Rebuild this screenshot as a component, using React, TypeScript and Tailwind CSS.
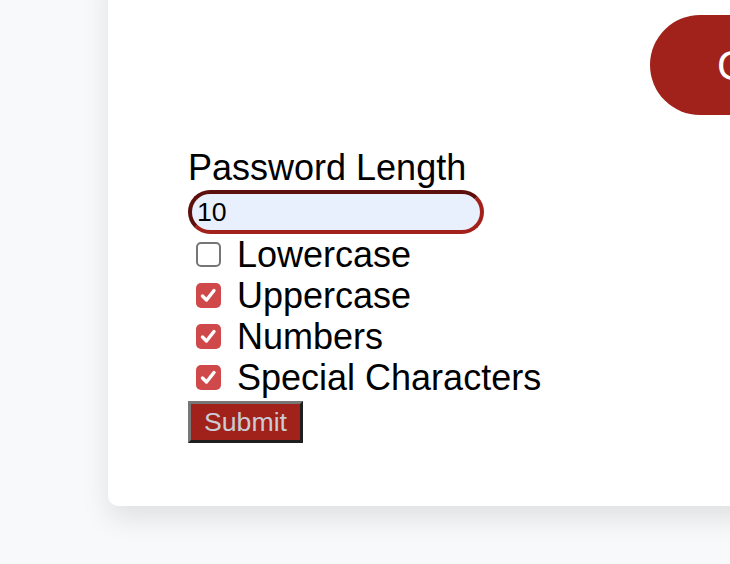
import React from "react";

function Box({ checked }: { checked: boolean }) {
  if (!checked) {
    return (
      <div className="ml-[8px] w-[25px] h-[25px] rounded-[5px] border-2 border-[#767676] bg-white shrink-0" />
    );
  }
  return (
    <div className="ml-[8px] w-[25px] h-[25px] rounded-[5px] bg-[#d0494a] shrink-0 flex items-center justify-center">
      <svg width="19" height="19" viewBox="0 0 19 19">
        <path d="M3.5 10 L7.5 14 L15 4.5" fill="none" stroke="white" strokeWidth="3.4" strokeLinecap="round" strokeLinejoin="round" />
      </svg>
    </div>
  );
}

function Row({ label, checked }: { label: string; checked: boolean }) {
  return (
    <div className="flex items-center h-[41px]">
      <Box checked={checked} />
      <span className="ml-[16px] text-[36px] leading-[41px] text-black">{label}</span>
    </div>
  );
}

export default function App() {
  return (
    <div
      className="w-[730px] h-[564px] overflow-hidden bg-[#f8f9fb]"
      style={{ fontFamily: '"Liberation Sans", Arial, Helvetica, sans-serif' }}
    >
      <div className="ml-[108px] -mt-[40px] w-[720px] bg-white rounded-[10px] shadow-[0_12px_28px_rgba(0,0,0,0.10)] pt-[55px] pl-[80px] pb-[63px] flex flex-col items-start">
        <div className="ml-[462px] h-[100px] rounded-full bg-[#a1221b] text-white text-[42px] flex items-center pl-[67px] pr-[60px] whitespace-nowrap">
          Generate
        </div>
        <div className="mt-[32px] text-[36px] leading-[41px] text-black">Password Length</div>
        <div className="mt-[2px] w-[296px] h-[44px] rounded-full border-4 border-t-[#5c0f0b] border-l-[#5c0f0b] border-r-[#a3211a] border-b-[#a3211a] bg-[#e8f0fe] flex items-center pl-[5px] text-[26.67px] text-black">
          10
        </div>
        <Row label="Lowercase" checked={false} />
        <Row label="Uppercase" checked={true} />
        <Row label="Numbers" checked={true} />
        <Row label="Special Characters" checked={true} />
        <div className="mt-[3px] h-[42px] flex items-center px-[13px] bg-[#a1221b] border-[3px] border-t-[#777777] border-l-[#777777] border-r-[#1f1f1f] border-b-[#1f1f1f] text-[26.67px] text-[#c9ccd5]">
          Submit
        </div>
      </div>
    </div>
  );
}
